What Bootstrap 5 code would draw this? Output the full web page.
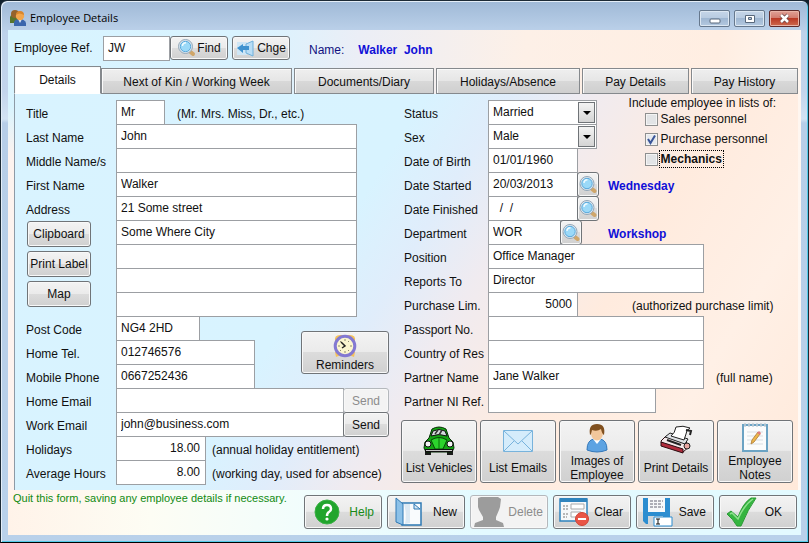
<!DOCTYPE html>
<html lang="en">
<head>
<meta charset="utf-8">
<meta name="viewport" content="width=device-width, initial-scale=1">
<title>Employee Details</title>
<link href="https://cdn.jsdelivr.net/npm/bootstrap@5.3.0/dist/css/bootstrap.min.css" rel="stylesheet">
<style>
:root{--line:#9c9fa3;--ink:#101010}
body{background:#10202c;color:var(--ink);font:12px/16px "Liberation Sans",Arial,sans-serif}
.win{background:linear-gradient(#9fb9d7,#bdd2ea 32px,#c3d5ec 90px,#d3e3f3 118px,#b7cee8 122px,#b9d1ea);border:1px solid #1c2a36;border-bottom-color:#000;border-radius:7px 7px 0 0;box-shadow:inset 1px 1px 0 #e4eef8,inset -1px -1px 0 #54cbe9;padding:0 7px 7px}
.titlebar{height:29px;padding:0 1px}
.caption-text{font:11px/16px "Open Sans","Noto Sans",sans-serif;color:#000;margin:9px 0 0 3px}
.capbtn{width:31px;height:17px;margin-top:9px;border:1px solid #66788d;border-radius:2px;background:linear-gradient(#c6d6e8,#b7cae0 50%,#9fb7d2 50%,#b4c9e0);box-shadow:inset 0 0 0 1px #dce7f2;padding:0}
.capbtn.shut{background:linear-gradient(#e0a197,#d2796b 50%,#bb3a26 50%,#cd6a4e);border-color:#5f2a2a;box-shadow:inset 0 0 0 1px #e9b3a6}
.client{background:linear-gradient(180deg,transparent 15%,#fdf3ef 25%,#fdf3ef) 0 0/6px 100% no-repeat,linear-gradient(95deg,#d8f4ff 0,#d9f3ff 30%,#ebeef6 42%,#fdf0e7 62%,#ffeee2 85%,#fffaf6 100%)}
.topline{height:36px;padding:6px 6px 0 5px}
.ref-label{width:90px;padding-left:1px;margin-top:4px}
.btn{--bs-btn-font-size:12px;--bs-btn-line-height:14px;--bs-btn-color:#101010;--bs-btn-disabled-color:#8c8c8c;--bs-btn-padding-x:0;--bs-btn-padding-y:0;--bs-btn-border-color:#707478;--bs-btn-border-radius:3px;--bs-btn-disabled-border-color:#b4b8bc;--bs-btn-disabled-opacity:1;background:linear-gradient(#f3f3f3,#ebebeb 48%,#dcdcdc 50%,#d0d0d0);box-shadow:inset 0 0 0 1px #f8f8f8;display:flex;align-items:center;justify-content:center;white-space:nowrap}
.btn:disabled{background:#f3f3f3}
.refbtn{width:58px;height:24px;gap:1px}
.field{height:25px;margin:0 0 -1px;border:1px solid var(--line);background:#fff;padding:0 4px 1px;color:var(--ink);font:12px/16px "Liberation Sans",Arial,sans-serif;border-radius:0;min-width:0}
.field:focus{outline:1px solid #5a8bc0}
.num{text-align:right;padding-right:5px}
.f49{width:49px}.f73{width:73px}.f84{width:84px}.f90{width:90px}.f109{width:109px}.f139{width:139px}.f168{width:168px}.f216{width:216px}.f228{width:228px}.f241{width:241px}
.reffield{width:67px;margin:0}
.who{color:#1010d8;font-weight:700}
.who-label{color:#101080;margin:6px 14px 0 19px}
.person{margin-top:6px}
.tabs{gap:2px;padding:0 3px 0 6px;align-items:flex-end;margin:0}
.tabs .nav-link{height:26px;padding:5px 0 0;border:1px solid #85898d;border-radius:0;color:var(--ink);background:linear-gradient(#efefef,#e6e6e6 48%,#d8d8d8 52%,#cfcfcf);text-align:center;box-shadow:inset 1px 1px 0 #fafafa;width:100%}
.tabs .nav-link.active{height:28px;background:#fff;border-bottom-color:#fff;color:var(--ink)}
.t-a{flex:87 1 0;margin-right:-2px}.t-b{flex:191 1 0}.t-c{flex:140 1 0}.t-d{flex:144 1 0}.t-e{flex:107 1 0}.t-f{flex:107 1 0}
.sheet{margin:0 3px 0 6px;border-left:1px solid #8d9aa6;padding:6px 0 5px;display:grid;grid-template-columns:383fr 400fr;background:linear-gradient(122deg,#d9f3ff 0,#d8f3ff 40%,#e0edfb 48%,#f0ebf0 56%,#ffebde 70%,#fff0e6 84%,#ffe9da 100%)}
.form-left,.form-right{display:grid;grid-auto-rows:24px;align-content:start}
.form-left{grid-template-columns:90px 1fr;padding-left:11px}
.form-right{grid-template-columns:84px 1fr;padding-left:6px}
.form-left>label,.form-right>label{grid-column:1;padding-top:6px;white-space:nowrap}
.cell{grid-column:2;display:flex;align-items:flex-start}
.r1{grid-row:1}.r2{grid-row:2}.r3{grid-row:3}.r4{grid-row:4}.r10{grid-row:10}.r11{grid-row:11}.r12{grid-row:12}
.note{padding:6px 0 0;white-space:nowrap}
.n6{margin-left:6px}.n9{margin-left:9px}.n12{margin-left:12px}.n26{margin-left:26px}.n54{margin-left:54px}
.placebtns{grid-column:1;grid-row:6/10;padding:1px 0 0 1px;gap:4px}
.placebtns .btn{width:64px;height:26px}
.reminder{grid-column:2;grid-row:10/13;justify-self:end;width:88px;height:43px;margin:15px 9px 0 0;flex-direction:column}
.send{width:46px;height:25px;margin-left:-1px}
.pick{width:22px;height:25px;margin-left:-1px}
.combo{display:grid}
.combo>*{grid-area:1/1}
.combo select{appearance:none}
.drop{width:17px;height:21px;margin:2px 2px 0 0;justify-self:end;border:1px solid #6f7377;background:linear-gradient(#f3f3f3,#d4d4d4);pointer-events:none;display:grid;place-items:center}
.drop::before{content:"";border:4px solid transparent;border-top:4px solid #000;border-bottom:0}
.lists{grid-column:2;grid-row:1/5;justify-self:end;margin:-5px 22px 0 0}
.lists .pickrow{height:20px;padding-left:16px;gap:1px;display:flex;align-items:center}
.lists .first{margin-top:-2px}
.form-check-input{width:13px;height:13px;margin:0;border:1px solid #8e8f8f;box-shadow:inset 0 0 0 1px #f4f4f4;background-color:#e2e4e6}
.form-check-input[type=checkbox]{border-radius:0}
.form-check-input:checked[type=checkbox]{background:#e6e9ee;border-color:#8e8f8f}
.tick{display:grid}.tick>*{grid-area:1/1}.tick svg{pointer-events:none}
.pickrow label{padding:0 1px;border:1px solid transparent}
.pickrow .lit{font-weight:700;border:1px dotted #000}
.bigbtns{display:grid;grid-template-columns:repeat(5,1fr);gap:3px;grid-column:1/-1;margin:8px 5px 0 -3px;height:63px}
.bigbtns .btn{flex-direction:column;justify-content:flex-end;padding-bottom:7px;white-space:normal;gap:5px}
.bigbtns .two{padding-bottom:0;gap:1px}
.bottom{padding:1px 4px 6px 5px;background:linear-gradient(90deg,#fff3e9 0,#fdfdf4 18%,#f1fdfd 38%,#e3faff 60%,#e3faff 100%)}
.status{font-size:11px;line-height:14px;color:#118a11}
.actions{gap:5px;padding-top:4px}
.actions .btn{width:78px;height:34px;justify-content:space-between;padding:0 7px}
.actions .help{color:#178a17;padding-left:9px}
.actions .fine{padding-right:14px;padding-left:6px}
.actions .gone{padding:0 4px 0 3px}
.actions .wide{padding-left:5px}
</style>
</head>
<body>
<main class="win d-flex flex-column min-vh-100">
<header class="titlebar d-flex">
<svg width="18" height="18" viewBox="0 0 18 18" class="mt-2" aria-hidden="true"><path d="M1 14V8q1-3 5-3 5 0 5 4v5z" fill="#58752b"/><circle cx="6" cy="5" r="4" fill="#95622a"/><path d="M5 17v-4q1-3 5.500-3 5 0 6.500 4v3z" fill="#3b66ac"/><path d="m9 10 2 4 2-4z" fill="#e3edf8"/><circle cx="11" cy="7" r="4.200" fill="#f2a64c"/><path d="M7 6q0-4 4-4t4 4q-5-3-8 0" fill="#d9862c"/></svg>
<h1 class="caption-text">Employee Details</h1>
<div class="ms-auto d-flex gap-1">
<button class="capbtn" aria-label="Minimize"><svg width="12" height="6" viewBox="0 0 12 6" class="d-block mx-auto mt-1"><rect x="1" y="1" width="10" height="4" rx="1" fill="#fff" stroke="#59697c"/></svg></button>
<button class="capbtn" aria-label="Restore"><svg width="12" height="10" viewBox="0 0 12 10" class="d-block mx-auto"><path d="M1.500 1.500h9v7h-9z" fill="#fff" stroke="#59697c"/><path d="M4.500 3.500h3v2h-3z" fill="#b7cae0" stroke="#59697c"/></svg></button>
<button class="capbtn shut" aria-label="Close"><svg width="13" height="11" viewBox="0 0 13 11" class="d-block mx-auto"><path d="m3 2 7 7m0-7L3 9" stroke="#6c4545" stroke-width="4"/><path d="m3 2 7 7m0-7L3 9" stroke="#fff" stroke-width="2.500"/></svg></button>
</div>
</header>
<svg width="0" height="0" class="position-absolute" aria-hidden="true"><symbol id="lens" viewBox="0 0 18 18"><path d="m13 13 2.500 2" stroke="#cfa66a" stroke-width="4" stroke-linecap="round"/><circle cx="8" cy="7.500" r="7" fill="#dce6ee" stroke="#93a7b8"/><circle cx="8" cy="7.500" r="5.200" fill="#9bd9f8" stroke="#5aa9dc"/><path d="M5 7q0-3 3.500-3.200" stroke="#f0fbff" stroke-width="1.500" fill="none"/></symbol></svg>
<div class="client flex-grow-1 d-flex flex-column">
<div class="topline d-flex align-items-start">
<label for="ref" class="ref-label">Employee Ref.</label>
<input id="ref" class="field reffield" value="JW">
<button class="btn refbtn"><svg width="19" height="18"><use href="#lens"/></svg>Find</button>
<button class="btn refbtn ms-1"><svg width="20" height="17" viewBox="0 0 20 17"><path d="M1 2h10v13H1z" fill="#cfe6f5"/><path d="M1 8l6-4v2h5v4H7v3z" fill="#3f92cf"/><path d="m10 4 7-3v15l-7-3z" fill="#b9ddf5" stroke="#6fb0dc"/><path d="M7 6h6v4H7z" fill="#3f92cf"/></svg>Chge</button>
<span class="who-label">Name:</span><span class="who person">Walker&nbsp; John</span>
</div>
<ul class="nav tabs flex-nowrap">
<li class="t-a"><a class="nav-link active" href="#details" aria-current="page">Details</a></li>
<li class="t-b"><a class="nav-link" href="#kin">Next of Kin / Working Week</a></li>
<li class="t-c"><a class="nav-link" href="#docs">Documents/Diary</a></li>
<li class="t-d"><a class="nav-link" href="#absence">Holidays/Absence</a></li>
<li class="t-e"><a class="nav-link" href="#pay">Pay Details</a></li>
<li class="t-f"><a class="nav-link" href="#history">Pay History</a></li>
</ul>
<section class="sheet flex-grow-1" id="details">
<div class="form-left">
<label for="title">Title</label><div class="cell"><input id="title" class="field f49" value="Mr"><span class="note n12">(Mr. Mrs. Miss, Dr., etc.)</span></div>
<label for="last">Last Name</label><div class="cell"><input id="last" class="field f241" value="John"></div>
<label for="middle">Middle Name/s</label><div class="cell"><input id="middle" class="field f241"></div>
<label for="first">First Name</label><div class="cell"><input id="first" class="field f241" value="Walker"></div>
<label for="addr">Address</label><div class="cell"><input id="addr" class="field f241" value="21 Some street"></div>
<div class="placebtns d-flex flex-column"><button class="btn">Clipboard</button><button class="btn">Print Label</button><button class="btn">Map</button></div>
<div class="cell"><input aria-label="Address line 2" class="field f241" value="Some Where City"></div>
<div class="cell"><input aria-label="Address line 3" class="field f241"></div>
<div class="cell"><input aria-label="Address line 4" class="field f241"></div>
<div class="cell"><input aria-label="Address line 5" class="field f241"></div>
<label for="post" class="r10">Post Code</label><div class="cell r10"><input id="post" class="field f84" value="NG4 2HD"></div>
<label for="tel" class="r11">Home Tel.</label><div class="cell r11"><input id="tel" class="field f139" value="012746576"></div>
<label for="mob" class="r12">Mobile Phone</label><div class="cell r12"><input id="mob" class="field f139" value="0667252436"></div>
<button class="btn reminder"><svg width="26" height="24" viewBox="0 0 26 24"><path d="M3 7q-1-6 5-6h3L5 9zM23 7q1-6-5-6h-3l6 8zM3 18l4-2 2 5-5 2zM23 18l-4-2-2 5 5 2z" fill="#f6c257"/><circle cx="13" cy="12" r="9.800" fill="#fbf6cf" stroke="#8379d2" stroke-width="3"/><path d="M13 5v2m0 10v2m-7-7h2m10 0h2M8 7l1 1m8-1-1 1M8 17l1-1m8 1-1-1" stroke="#8d8a72"/><path d="m9 8 4 4-3 2" fill="none" stroke="#222" stroke-width="1.500"/></svg>Reminders</button>
<label for="hmail">Home Email</label><div class="cell"><input id="hmail" class="field f228" type="email"><button class="btn send" disabled>Send</button></div>
<label for="wmail">Work Email</label><div class="cell"><input id="wmail" class="field f228" type="email" value="john@business.com"><button class="btn send">Send</button></div>
<label for="hol">Holidays</label><div class="cell"><input id="hol" class="field f90 num" value="18.00"><span class="note n6">(annual holiday entitlement)</span></div>
<label for="avg">Average Hours</label><div class="cell"><input id="avg" class="field f90 num" value="8.00"><span class="note n6">(working day, used for absence)</span></div>
</div>
<div class="form-right">
<label for="status" class="r1">Status</label><div class="cell r1"><div class="combo"><select id="status" class="field f109"><option>Married</option><option>Single</option></select><span class="drop"></span></div></div>
<label for="sex" class="r2">Sex</label><div class="cell r2"><div class="combo"><select id="sex" class="field f109"><option>Male</option><option>Female</option></select><span class="drop"></span></div></div>
<label for="dob" class="r3">Date of Birth</label><div class="cell r3"><input id="dob" class="field f90" value="01/01/1960"></div>
<label for="ds" class="r4">Date Started</label><div class="cell r4"><input id="ds" class="field f90" value="20/03/2013"><button class="btn pick" aria-label="Pick start date"><svg width="18" height="18"><use href="#lens"/></svg></button><span class="note who n9">Wednesday</span></div>
<div class="lists"><div>Include employee in lists of:</div>
<div class="pickrow first"><input class="form-check-input" type="checkbox" id="c1"><label for="c1">Sales personnel</label></div>
<div class="pickrow"><span class="tick"><input class="form-check-input" type="checkbox" id="c2" checked><svg width="13" height="13" viewBox="0 0 13 13"><path d="m3 6 2.500 4L10 2.500" fill="none" stroke="#3a5598" stroke-width="2"/></svg></span><label for="c2">Purchase personnel</label></div>
<div class="pickrow"><input class="form-check-input" type="checkbox" id="c3"><label for="c3" class="lit">Mechanics</label></div></div>
<label for="df">Date Finished</label><div class="cell"><input id="df" class="field f90" value="  /  /"><button class="btn pick" aria-label="Pick finish date"><svg width="18" height="18"><use href="#lens"/></svg></button></div>
<label for="dep">Department</label><div class="cell"><input id="dep" class="field f73" value="WOR"><button class="btn pick" aria-label="Pick department"><svg width="18" height="18"><use href="#lens"/></svg></button><span class="note who n26">Workshop</span></div>
<label for="pos">Position</label><div class="cell"><input id="pos" class="field f216" value="Office Manager"></div>
<label for="rep">Reports To</label><div class="cell"><input id="rep" class="field f216" value="Director"></div>
<label for="lim">Purchase Lim.</label><div class="cell"><input id="lim" class="field f90 num" value="5000"><span class="note n54">(authorized purchase limit)</span></div>
<label for="pass">Passport No.</label><div class="cell"><input id="pass" class="field f216"></div>
<label for="res">Country of Res</label><div class="cell"><input id="res" class="field f216"></div>
<label for="par">Partner Name</label><div class="cell"><input id="par" class="field f216" value="Jane Walker"><span class="note n12">(full name)</span></div>
<label for="ni">Partner NI Ref.</label><div class="cell"><input id="ni" class="field f168"></div>
<div class="bigbtns">
<button class="btn"><svg width="32" height="30" viewBox="0 0 32 30"><path d="M2 24h6v5H2zm22 0h6v5h-6z" fill="#1c1c1c"/><path d="M6 12 9 3q7-4 14 0l3 9 4 4 1 6-2 4H3l-2-4 1-6z" fill="#12a312" stroke="#052f05"/><path d="m8 10 2-5q6-3 12 0l2 5q-8-3-16 0" fill="#d4dadd" stroke="#111"/><path d="M12 8l3-4m1 5 3-5" stroke="#333" stroke-width="1.500"/><path d="M8 14q8-5 16 0l-4 9h-8z" fill="#2cd32c" stroke="#064806"/><path d="M16 12v11" stroke="#0a700a"/><circle cx="5" cy="18" r="3" fill="#f4f4f4" stroke="#111"/><circle cx="27" cy="18" r="3" fill="#f4f4f4" stroke="#111"/><path d="M2 24.500h28" stroke="#111" stroke-width="3"/><path d="M3 24.500h26" stroke="#c9c9c9"/></svg>List Vehicles</button>
<button class="btn"><svg width="32" height="32" viewBox="0 0 32 32"><path d="M1.500 6.500h29v21h-29z" fill="#d5ecfb" stroke="#78b3dc"/><path d="m2 7 14 13L30 7M2 27l10-10m18 10L20 17" fill="none" stroke="#78b3dc"/></svg>List Emails</button>
<button class="btn two"><svg width="30" height="30" viewBox="0 0 30 30"><path d="M5 27q0-10 7-11h6q7 1 7 11-10 4-20 0" fill="#5da3e2" stroke="#3378ba"/><path d="m11 16 4 5 4-5z" fill="#fff"/><ellipse cx="15" cy="10" rx="6" ry="7.500" fill="#f2c79b"/><path d="M8 12Q6 1 15 1t7 11q-2-1-3-6-4 3-9 1-1 5-2 5" fill="#80501f"/></svg>Images of Employee</button>
<button class="btn"><svg width="34" height="34" viewBox="0 0 34 34"><path d="m2 19 5-5 20 6 4 4-7 6L3 23z" fill="#f4e9ea" stroke="#2b0b10"/><path d="m2 20 22 7v4L2 24z" fill="#b02c3c" stroke="#2b0b10"/><path d="m6 15 5-4 18 6-3 5z" fill="#dfe2e6" stroke="#222"/><path d="M12 14q4-3 5-9 7-2 14 1-4 2-4 6l-2 6z" fill="#fff" stroke="#222"/><path d="m27 8 5 1-1 4M8 18l14 5" fill="none" stroke="#222" stroke-width="2"/><circle cx="28" cy="24" r="3" fill="#e8a6a2" stroke="#222"/></svg>Print Details</button>
<button class="btn two"><svg width="30" height="31" viewBox="0 0 30 31"><path d="M2 2h26v28H2z" fill="#6ba3c4"/><path d="M4 4h22v24H4z" fill="#fbfcfc"/><path d="M7 10h16M7 14h16M7 18h16M7 22h16" stroke="#d9dfe3"/><path d="M5 1v4m4-4v4m4-4v4m4-4v4m4-4v4m4-4v4" stroke="#c4d0d8" stroke-width="1.500"/><path d="m11 22 1-4 6-8 2 2-6 8z" fill="#efb84a" stroke="#b98a45"/><path d="m17 11 2-2 2 2-1 2z" fill="#df7c7c"/></svg>Employee Notes</button>
</div>
</div>
</section>
<footer class="bottom d-flex justify-content-between align-items-start">
<div class="status text-nowrap">Quit this form, saving any employee details if necessary.</div>
<div class="actions d-flex">
<button class="btn help"><svg width="26" height="26" viewBox="0 0 26 26"><circle cx="13" cy="13" r="12" fill="#21a52d" stroke="#3cb046"/><path d="M9 10q0-4 4-4t4 4q0 2-2 3t-2 4" fill="none" stroke="#fff" stroke-width="2.500"/><circle cx="13" cy="20" r="1.600" fill="#fff"/></svg>Help</button>
<button class="btn"><svg width="28" height="30" viewBox="0 0 28 30"><path d="M7 6h19v22H7z" fill="#f9fbfd" stroke="#2e79b4" stroke-width="1.500"/><path d="m1 1 7 6v21l-7-3z" fill="#8cc1e8" stroke="#2e79b4"/><path d="M9 7q3 10 1 20l5-1V7z" fill="#dce9f3"/><path d="M19 7v5h6z" fill="#d5e7f5" stroke="#2e79b4"/></svg>New</button>
<button class="btn gone" disabled><svg width="30" height="30" viewBox="0 0 30 30"><path d="m4 1 3-1h17l3 2-1 8-1 3-3 7v3l7 3 1 4H0l1-4 8-3v-3l-4-7-1-3z" fill="#9c9c9c"/></svg>Delete</button>
<button class="btn wide"><svg width="30" height="30" viewBox="0 0 30 30"><path d="M1 2h27v22H1z" fill="#f6f8fa" stroke="#2f83bd" stroke-width="1.500"/><path d="M1 1h27v4H1z" fill="#2f83bd"/><path d="M12 7h13v5H12zm0 8h10v5H12z" fill="#fff" stroke="#aaa"/><path d="M4 9h6m-6 3h5m-5 5h6m-6 3h4" stroke="#777" stroke-dasharray="2 1"/><circle cx="23" cy="22" r="6.500" fill="#ea5546" stroke="#cf4436"/><path d="M19 22h8" stroke="#fff" stroke-width="2"/></svg>Clear</button>
<button class="btn wide"><svg width="31" height="30" viewBox="0 0 31 30"><path d="M1 1h27v26H4l-3-3z" fill="#2c8dd0"/><path d="M6 1h17v14H6z" fill="#f6f8fa"/><path d="M8 4h13M8 7h12M8 10h13" stroke="#667" stroke-dasharray="3 1"/><path d="M6 19h15v8H6z" fill="#cfd6dc"/><path d="M12 20h18v9H12z" fill="#fff" stroke="#2c8dd0"/><path d="M14 22h4m-2 0v5m-2 0h4" stroke="#111"/></svg>Save</button>
<button class="btn fine"><svg width="31" height="30" viewBox="0 0 31 30"><path d="m1 17 4-3 7 6Q17 6 25 1h5Q22 12 15 29h-4Q7 22 1 17z" fill="#35b540" stroke="#2a9a35"/><path d="m4 17 2-1 6 6Q18 8 27 2" fill="none" stroke="#8de08d" stroke-width="1.500"/></svg>OK</button>
</div>
</footer>
</div>
</main>
<script src="https://cdn.jsdelivr.net/npm/bootstrap@5.3.0/dist/js/bootstrap.bundle.min.js"></script>
</body>
</html>
